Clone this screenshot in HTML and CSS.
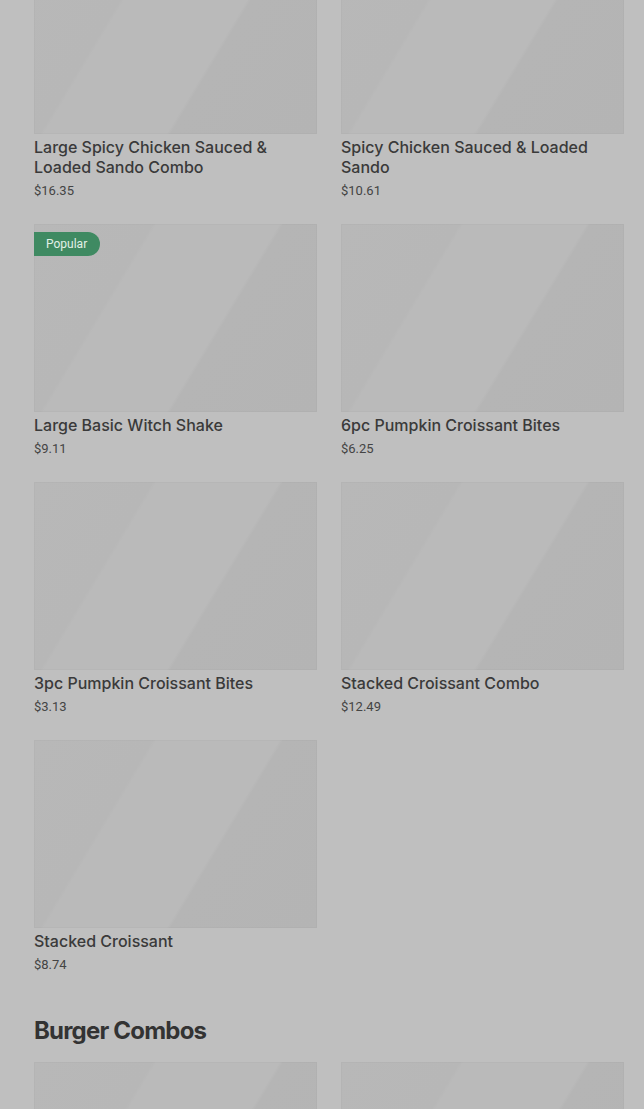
FILE: index.html
```html
<!DOCTYPE html>
<html lang="en">
<head>
<meta charset="utf-8">
<link rel="stylesheet" href="styles.css">
</head>
<body>
<main class="menu">
  <section class="section section-first">
    <div class="grid">
      <div class="card">
        <div class="thumb"></div>
        <div class="title">Large Spicy Chicken Sauced &amp; Loaded Sando Combo</div>
        <div class="price">$16.35</div>
      </div>
      <div class="card">
        <div class="thumb"></div>
        <div class="title">Spicy Chicken Sauced &amp; Loaded Sando</div>
        <div class="price">$10.61</div>
      </div>
      <div class="card">
        <div class="thumb"><span class="badge">Popular</span></div>
        <div class="title">Large Basic Witch Shake</div>
        <div class="price">$9.11</div>
      </div>
      <div class="card">
        <div class="thumb"></div>
        <div class="title">6pc Pumpkin Croissant Bites</div>
        <div class="price">$6.25</div>
      </div>
      <div class="card">
        <div class="thumb"></div>
        <div class="title">3pc Pumpkin Croissant Bites</div>
        <div class="price">$3.13</div>
      </div>
      <div class="card">
        <div class="thumb"></div>
        <div class="title">Stacked Croissant Combo</div>
        <div class="price">$12.49</div>
      </div>
      <div class="card">
        <div class="thumb"></div>
        <div class="title">Stacked Croissant</div>
        <div class="price">$8.74</div>
      </div>
    </div>
  </section>
  <section class="section">
    <h2 class="heading">Burger Combos</h2>
    <div class="grid">
      <div class="card">
        <div class="thumb"></div>
      </div>
      <div class="card">
        <div class="thumb"></div>
      </div>
    </div>
  </section>
</main>
</body>
</html>
```

FILE: styles.css
```css
html, body {
  margin: 0;
  padding: 0;
  background: #bfbfbf;
}
body {
  font-family: Inter, "Liberation Sans", sans-serif;
  color: #3a3a3a;
  overflow: hidden;
  height: 1109px;
}
.menu {
  padding: 0 20px 0 34px;
}
.section-first {
  margin-top: -54px;
}
.grid {
  display: grid;
  grid-template-columns: 283px 283px;
  column-gap: 24px;
  row-gap: 23px;
}
.thumb {
  position: relative;
  height: 188px;
  background: linear-gradient(121deg, #b8b8b8 0%, #b7b7b7 30%, #bababa 31%, #bababa 62%, #b5b5b5 63%, #b4b4b4 100%);
  box-shadow: inset 0 0 0 1px rgba(0, 0, 0, 0.02);
}
.badge {
  position: absolute;
  left: 0;
  top: 8px;
  height: 24px;
  line-height: 24px;
  padding: 0 13px 0 12px;
  background: #3f8a62;
  color: #e2f0e7;
  font-family: Roboto, "Liberation Sans", sans-serif;
  font-size: 12px;
  border-radius: 0 12px 12px 0;
}
.title {
  margin-top: 3px;
  font-size: 16px;
  line-height: 20px;
  font-weight: 500;
  color: #3a3a3a;
}
.price {
  margin-top: 4px;
  font-family: Roboto, "Liberation Sans", sans-serif;
  font-size: 13px;
  line-height: 20px;
  color: #444444;
}
.heading {
  margin: 40px 0 15px;
  font-size: 24px;
  line-height: 32px;
  font-weight: 700;
  letter-spacing: -0.8px;
  color: #333333;
}
```
